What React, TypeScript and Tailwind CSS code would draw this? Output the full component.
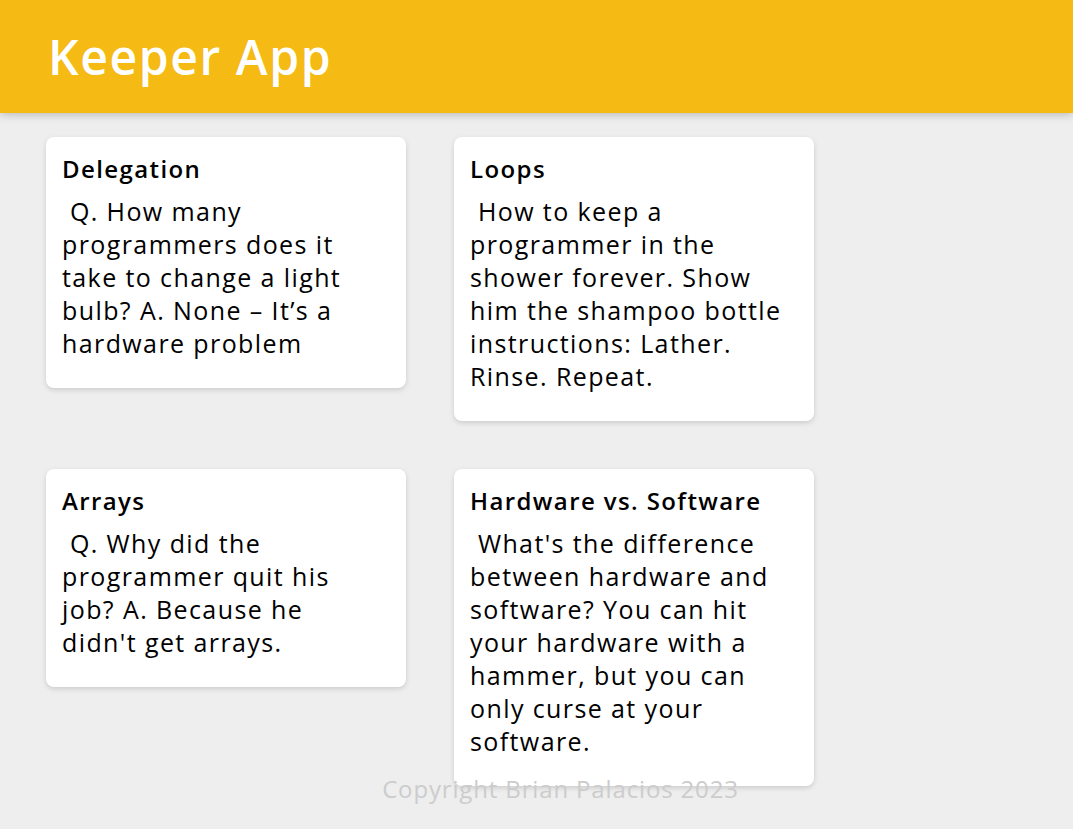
import React from "react";

const notes = [
  {
    title: "Delegation",
    lines: [
      " Q. How many",
      "programmers does it",
      "take to change a light",
      "bulb? A. None – It’s a",
      "hardware problem",
    ],
  },
  {
    title: "Loops",
    lines: [
      " How to keep a",
      "programmer in the",
      "shower forever. Show",
      "him the shampoo bottle",
      "instructions: Lather.",
      "Rinse. Repeat.",
    ],
  },
  {
    title: "Arrays",
    lines: [
      " Q. Why did the",
      "programmer quit his",
      "job? A. Because he",
      "didn't get arrays.",
    ],
  },
  {
    title: "Hardware vs. Software",
    lines: [
      " What's the difference",
      "between hardware and",
      "software? You can hit",
      "your hardware with a",
      "hammer, but you can",
      "only curse at your",
      "software.",
    ],
  },
];

const Note = ({ title, lines }: { title: string; lines: string[] }) => (
  <div className="bg-white rounded-[8px] shadow-[0_2px_5px_#ccc] p-4 w-[360px] m-6">
    <h1 className="text-[24px] leading-[32px] font-semibold tracking-[1.4px] mb-[10px]">
      {title}
    </h1>
    <p className="text-[25px] leading-[33px] tracking-[1.4px] mb-3">
      {lines.map((line, i) => (
        <span key={i} className="block whitespace-pre">
          {line}
        </span>
      ))}
    </p>
  </div>
);

export default function App() {
  return (
    <div
      className="relative min-h-[829px] bg-[#eeeeee] px-[22px] text-black"
      style={{ fontFamily: '"Open Sans", "Noto Sans", sans-serif' }}
    >
      <header className="bg-[#f5ba13] -mx-[22px] h-[113px] px-[48px] flex items-center shadow-[0_0_10px_0_rgba(0,0,0,0.3)]">
        <h1 className="text-white text-[48px] font-semibold tracking-[1.6px]">
          Keeper App
        </h1>
      </header>
      <div className="flex flex-wrap items-start">
        {notes.map((note, i) => (
          <Note key={i} title={note.title} lines={note.lines} />
        ))}
      </div>
      <footer className="absolute left-[24px] w-full bottom-0 h-[52px] text-center">
        <p className="text-[#cccccc] text-[24px] leading-[24px] tracking-[0.85px]">
          Copyright Brian Palacios 2023
        </p>
      </footer>
    </div>
  );
}
